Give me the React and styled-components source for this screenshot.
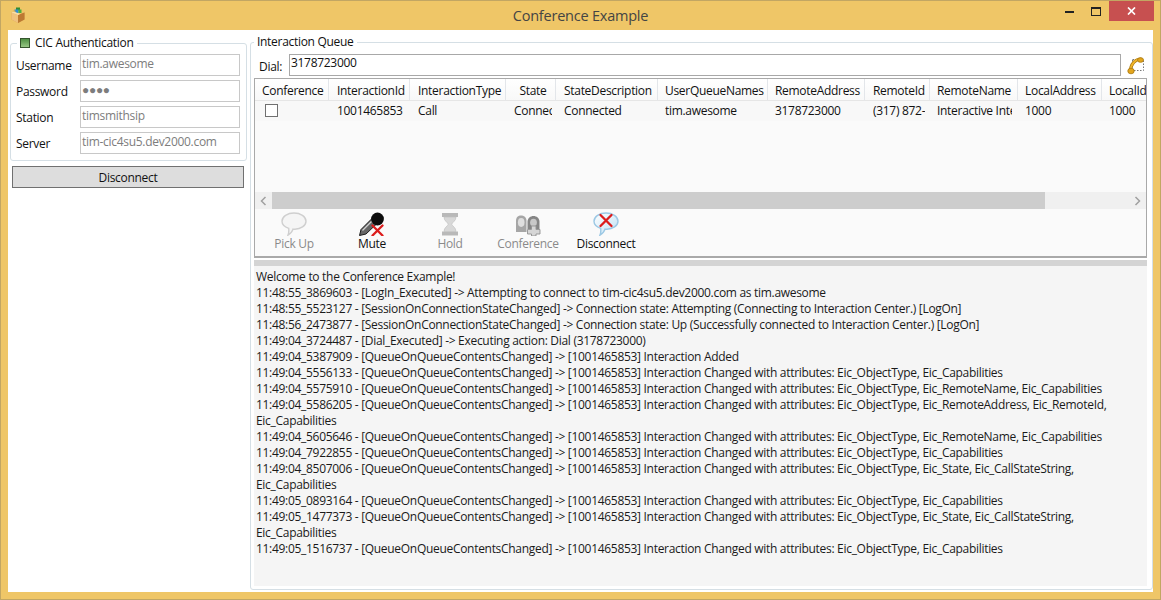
import React from "react";
import styled, { createGlobalStyle } from "styled-components";

const Global = createGlobalStyle`
  html, body { margin: 0; padding: 0; width: 1161px; height: 600px; overflow: hidden; }
  body { font-family: "Open Sans", "Noto Sans", sans-serif; font-size: 12px; letter-spacing: -0.3px; color: #111; }
  * { box-sizing: border-box; }
`;

const Frame = styled.div`
  width: 1161px; height: 600px; display: flex; flex-direction: column;
  background: #efc667; border: 1px solid #c2a663; padding: 0 7px 7px;
`;
const TitleBar = styled.header`
  height: 29px; flex: none; display: grid; grid-template-columns: 1fr auto 1fr; align-items: start;
`;
const AppIcon = styled.svg` width: 16px; height: 16px; margin: 6px 0 0 2px; `;
const Title = styled.h1`
  margin: 5px 0 0; font-size: 14.5px; font-weight: 400; line-height: 20px; color: #444; letter-spacing: -0.22px;
`;
const Controls = styled.div` display: flex; justify-content: flex-end; margin-right: -1px; `;
const Ctl = styled.div`
  width: ${p => p.$w}px; height: 20px; display: flex; align-items: center; justify-content: center;
  background: ${p => p.$bg || "transparent"};
`;
const Client = styled.main`
  flex: 1; min-height: 0; background: #fff; display: flex; padding: 5px 0 2px 2px; gap: 3px;
`;
const Left = styled.section` width: 237px; flex: none; display: flex; flex-direction: column; `;
const Group = styled.fieldset`
  margin: 0; min-width: 0; border: 1px solid #d5dfe5; border-radius: 3px;
`;
const AuthGroup = styled(Group)` padding: 3px 5px 6px 5px; height: 126px; `;
const Legend = styled.legend`
  padding: 0 4px 0 3px; margin-left: ${p => p.$ml}px; line-height: 16px; display: flex; align-items: center; gap: 5px;
`;
const Led = styled.span`
  width: 10px; height: 10px; background: linear-gradient(#4f9144, #97c785); border: 1px solid #35552e;
`;
const FormRow = styled.label`
  display: grid; grid-template-columns: 64px 160px; align-items: center; height: 22px; margin-bottom: 4px;
`;
const FieldLabel = styled.span``;
const TextBox = styled.div`
  height: 22px; border: 1px solid #c8c8c8; padding: 0 2px 2px 1px; line-height: 17px; color: ${p => p.$c || "#7d7d7d"};
  white-space: nowrap; overflow: hidden;
`;
const ConnectButton = styled.button`
  margin: 5px 3px 0 2px; height: 22px; background: #dddddd; border: 1px solid #707070; padding: 0;
  font: inherit; letter-spacing: inherit; color: #111;
`;
const QueueGroup = styled(Group)`
  flex: 1; min-width: 0; padding: 0 4px 3px 3px; display: flex; flex-direction: column; margin-top: -1px;
`;
const DialRow = styled.div` display: flex; align-items: center; height: 22px; margin-top: 4px; `;
const DialLabel = styled.span` width: 35px; padding: 3px 0 0 5px; `;
const DialInput = styled(TextBox)` flex: none; width: 832px; border-color: #a8a8a8; height: 22px; line-height: 16px; `;
const PhoneIcon = styled.svg` width: 18px; height: 19px; margin-left: 5px; `;
const Grid = styled.div`
  margin-top: 2px; width: 893px; height: 180px; flex: none; border: 1px solid #a9a9a9; border-bottom-width: 2px;
  background: #fafafa; display: flex; flex-direction: column; overflow: hidden;
`;
const TableArea = styled.div` height: 113px; flex: none; overflow: hidden; `;
const RowLine = styled.div`
  display: flex; width: 920px;
  height: ${p => p.$h}px; background: ${p => p.$head ? "linear-gradient(#ffffff, #f8f8f8)" : "#f8f8f8"};
`;
const HeadCell = styled.div`
  width: ${p => p.$w}px; flex: none; padding-left: ${p => p.$pl ?? 8}px; line-height: 23px; border-right: 1px solid #e3e6ea;
  border-bottom: 1px solid #e6e6e6; white-space: nowrap; overflow: hidden;
  text-align: ${p => p.$center ? "center" : "left"};
`;
const DataCell = styled.div`
  width: ${p => p.$w}px; flex: none; padding-left: ${p => p.$pl ?? 8}px; padding-right: ${p => p.$pr ?? 0}px; line-height: 19px;
  height: 20px; overflow: hidden; white-space: nowrap;
`;
const Clip = styled.div` overflow: hidden; `;
const Check = styled.span`
  display: block; width: 13px; height: 13px; border: 1px solid #707070; background: #fff; margin: 3px 0 0 10px;
`;
const HScroll = styled.div` height: 17px; flex: none; background: #f0f0f0; display: flex; align-items: center; `;
const Arrow = styled.div` width: 17px; height: 17px; display: flex; align-items: center; justify-content: center; flex: none; `;
const Thumb = styled.div` width: 773px; height: 17px; background: #cdcdcd; flex: none; `;
const Spacer = styled.div` flex: 1; `;
const Toolbar = styled.div` display: flex; flex: 1; `;
const ToolButton = styled.div`
  width: 78px; display: flex; flex-direction: column; align-items: center; padding-top: 3px;
  color: ${p => p.$off ? "#8a8a8a" : "#111"};
`;
const ToolIcon = styled.svg` width: 28px; height: 24px; flex: none; `;
const ToolLabel = styled.span` line-height: 16px; `;
const Splitter = styled.div` height: 6px; width: 893px; flex: none; background: #d4d4d4; margin-top: 2px; `;
const Log = styled.div` flex: 1; width: 893px; background: #f5f5f5; padding: 3px 2px 2px; `;
const LogLine = styled.div` line-height: 16px; white-space: nowrap; color: #1a1a1a; `;

const cols = [
  ["Conference", 74, false, 7], ["InteractionId", 81], ["InteractionType", 96], ["State", 50, true, 5],
  ["StateDescription", 102], ["UserQueueNames", 110, false, 7], ["RemoteAddress", 97, false, 7], ["RemoteId", 65],
  ["RemoteName", 88, false, 7], ["LocalAddress", 84, false, 7], ["LocalId", 60, false, 7],
];
const cells = [
  [null, 74, 0], ["1001465853", 81], ["Call", 96], ["Connected", 50, 8, 4], ["Connected", 102],
  ["tim.awesome", 110, 7], ["3178723000", 97, 7], ["(317) 872-1000", 65, 8, 5], ["Interactive Intelligence", 88, 7, 6],
  ["1000", 84, 7], ["1000", 60, 7],
];
const log = [
  "Welcome to the Conference Example!",
  "11:48:55_3869603 - [LogIn_Executed] -> Attempting to connect to tim-cic4su5.dev2000.com as tim.awesome",
  "11:48:55_5523127 - [SessionOnConnectionStateChanged] -> Connection state: Attempting (Connecting to Interaction Center.) [LogOn]",
  "11:48:56_2473877 - [SessionOnConnectionStateChanged] -> Connection state: Up (Successfully connected to Interaction Center.) [LogOn]",
  "11:49:04_3724487 - [Dial_Executed] -> Executing action: Dial (3178723000)",
  "11:49:04_5387909 - [QueueOnQueueContentsChanged] -> [1001465853] Interaction Added",
  "11:49:04_5556133 - [QueueOnQueueContentsChanged] -> [1001465853] Interaction Changed with attributes: Eic_ObjectType, Eic_Capabilities",
  "11:49:04_5575910 - [QueueOnQueueContentsChanged] -> [1001465853] Interaction Changed with attributes: Eic_ObjectType, Eic_RemoteName, Eic_Capabilities",
  "11:49:04_5586205 - [QueueOnQueueContentsChanged] -> [1001465853] Interaction Changed with attributes: Eic_ObjectType, Eic_RemoteAddress, Eic_RemoteId,",
  "Eic_Capabilities",
  "11:49:04_5605646 - [QueueOnQueueContentsChanged] -> [1001465853] Interaction Changed with attributes: Eic_ObjectType, Eic_RemoteName, Eic_Capabilities",
  "11:49:04_7922855 - [QueueOnQueueContentsChanged] -> [1001465853] Interaction Changed with attributes: Eic_ObjectType, Eic_Capabilities",
  "11:49:04_8507006 - [QueueOnQueueContentsChanged] -> [1001465853] Interaction Changed with attributes: Eic_ObjectType, Eic_State, Eic_CallStateString,",
  "Eic_Capabilities",
  "11:49:05_0893164 - [QueueOnQueueContentsChanged] -> [1001465853] Interaction Changed with attributes: Eic_ObjectType, Eic_Capabilities",
  "11:49:05_1477373 - [QueueOnQueueContentsChanged] -> [1001465853] Interaction Changed with attributes: Eic_ObjectType, Eic_State, Eic_CallStateString,",
  "Eic_Capabilities",
  "11:49:05_1516737 - [QueueOnQueueContentsChanged] -> [1001465853] Interaction Changed with attributes: Eic_ObjectType, Eic_Capabilities",
];

const bubblePath = "M14 1c6.500 0 12 3.500 12 8.200 0 4.600-5.500 8-11 8-.8 0-1.500 0-2-.1-.5 2-2.500 4.500-5 6 .8-2 1-4 .7-6.800C4.500 14.800 2 12.300 2 9.200 2 4.500 7.500 1 14 1z";
const Bubble = ({ fill, stroke }) => <path d={bubblePath} fill={fill} stroke={stroke} strokeWidth="1.400" />;
const RedX = ({ x, y, s }) => (
  <path d={`M${x - s} ${y - s}L${x + s} ${y + s}M${x + s} ${y - s}L${x - s} ${y + s}`} stroke="#dc1c1c" strokeWidth="2.300" strokeLinecap="round" />
);

const tools = [
  { label: "Pick Up", off: true, icon: <Bubble fill="#f5f5f5" stroke="#cfcfcf" /> },
  {
    label: "Mute",
    icon: (
      <>
        <path d="M1.500 23.500l1.500-6L14 6.500l5 5L8 22z" fill="#666" stroke="#1c1c1c" strokeWidth="1" />
        <path d="M4.500 18.500l9-9" stroke="#d0d0d0" strokeWidth="1.200" />
        <circle cx="19.500" cy="7" r="6.400" fill="#0c0c0c" />
        <RedX x={19.500} y={18.500} s={5} />
      </>
    ),
  },
  {
    label: "Hold",
    off: true,
    icon: (
      <>
        <rect x="6" y="1" width="16" height="4" fill="#b9b9b9" />
        <rect x="6" y="19.500" width="16" height="4" fill="#b9b9b9" />
        <path d="M8 5h12c0 4-3.500 5-4.300 7.200.8 2.200 4.300 3.300 4.300 7.300H8c0-4 3.500-5.100 4.300-7.300C11.500 10 8 9 8 5z" fill="#d8d8d8" stroke="#c2c2c2" strokeWidth=".7" />
      </>
    ),
  },
  {
    label: "Conference",
    off: true,
    icon: (
      <>
        <path d="M2 20V9c0-4 2.200-5.500 5-5.500S12.500 5 12.500 9v11z" fill="#a6a6a6" />
        <ellipse cx="7.200" cy="10.500" rx="3.300" ry="4.400" fill="#dedede" />
        <path d="M13.500 17v-7c0-4 3-6 6-6s6 2 6 6v7z" fill="#858585" />
        <ellipse cx="19.500" cy="10.500" rx="3.400" ry="3.800" fill="#c8c8c8" />
        <path d="M17.500 14h4.500v3.500h4v4.500h-4v2h-4.500v-2h-4v-4.500h4z" fill="#d6d6d6" stroke="#929292" strokeWidth=".9" />
      </>
    ),
  },
  {
    label: "Disconnect",
    icon: (
      <>
        <defs>
          <linearGradient id="discFill" x1="0" x2="1" y1="0" y2="1">
            <stop offset="0" stopColor="#ffffff" />
            <stop offset="1" stopColor="#bfe0f4" />
          </linearGradient>
        </defs>
        <Bubble fill="url(#discFill)" stroke="#9cc8e4" />
        <RedX x={14} y={8.500} s={5.500} />
      </>
    ),
  },
];

export default function App() {
  return (
    <>
      <Global />
      <Frame>
        <TitleBar>
          <AppIcon viewBox="0 0 16 16">
            <rect x="6" y="0.500" width="4" height="3" fill="#2f8a34" />
            <rect x="4.500" y="2.500" width="4" height="3.500" fill="#2f8fd6" />
            <rect x="8.500" y="2.500" width="3" height="3.500" fill="#4cae3d" />
            <rect x="3.500" y="3.500" width="2" height="2" fill="#c9a44a" />
            <path d="M1.500 5.500L8 8 14.500 5.500V12.500L8 16 1.500 12.500z" fill="#d8994e" />
            <path d="M1.500 5.500L8 8V16L1.500 12.500z" fill="#f0c27c" />
            <path d="M8 8l6.500-2.500V12.500L8 16z" fill="#bd7a32" />
            <path d="M1.500 5.500L4 4.500l6 2.500L8 8z" fill="#f7dca8" />
          </AppIcon>
          <Title>Conference Example</Title>
          <Controls>
            <Ctl $w={26}><svg width="9" height="3"><rect width="9" height="2" y="1" fill="#222" /></svg></Ctl>
            <Ctl $w={27}><svg width="10" height="9"><rect x=".5" y=".5" width="9" height="8" fill="none" stroke="#222" /><rect width="10" height="2" fill="#222" /></svg></Ctl>
            <Ctl $w={45} $bg="#c75050"><svg width="9" height="8"><path d="M1 .5L8 7.500M8 .5L1 7.500" stroke="#fff" strokeWidth="1.700" /></svg></Ctl>
          </Controls>
        </TitleBar>
        <Client>
          <Left>
            <AuthGroup>
              <Legend $ml={1}><Led />CIC Authentication</Legend>
              <FormRow><FieldLabel>Username</FieldLabel><TextBox>tim.awesome</TextBox></FormRow>
              <FormRow><FieldLabel>Password</FieldLabel><TextBox>●●●●</TextBox></FormRow>
              <FormRow><FieldLabel>Station</FieldLabel><TextBox>timsmithsip</TextBox></FormRow>
              <FormRow><FieldLabel>Server</FieldLabel><TextBox>tim-cic4su5.dev2000.com</TextBox></FormRow>
            </AuthGroup>
            <ConnectButton>Disconnect</ConnectButton>
          </Left>
          <QueueGroup>
            <Legend $ml={0}>Interaction Queue</Legend>
            <DialRow>
              <DialLabel>Dial:</DialLabel>
              <DialInput $c="#111">3178723000</DialInput>
              <PhoneIcon viewBox="0 0 18 19">
                <rect x="6.500" y="3.500" width="11" height="11" fill="none" stroke="#777" strokeDasharray="1.500 1.500" />
                <path d="M15.500 3C9 3 4.500 8.500 4.500 15" fill="none" stroke="#a9770d" strokeWidth="3.200" />
                <path d="M15.500 3C9 3 4.500 8.500 4.500 15" fill="none" stroke="#f0b429" strokeWidth="1.800" />
                <ellipse cx="14.500" cy="4" rx="3" ry="2.300" fill="#e3a51d" stroke="#a9770d" strokeWidth=".8" />
                <ellipse cx="5" cy="15" rx="3.200" ry="2.800" fill="#e3a51d" stroke="#a9770d" strokeWidth=".8" />
              </PhoneIcon>
            </DialRow>
            <Grid>
              <TableArea>
                <RowLine $h={22} $head>
                  {cols.map(([t, w, c, pl]) => <HeadCell key={t} $w={w} $center={c} $pl={pl}>{t}</HeadCell>)}
                </RowLine>
                <RowLine $h={20}>
                  {cells.map(([t, w, pl, pr], i) => (
                    <DataCell key={i} $w={w} $pl={pl} $pr={pr}>
                      {t ? <Clip>{t}</Clip> : <Check />}
                    </DataCell>
                  ))}
                </RowLine>
              </TableArea>
              <HScroll>
                <Arrow><svg width="7" height="10"><path d="M5.500 1L1.500 5l4 4" fill="none" stroke="#a0a0a0" strokeWidth="1.500" /></svg></Arrow>
                <Thumb />
                <Spacer />
                <Arrow><svg width="7" height="10"><path d="M1.500 1l4 4-4 4" fill="none" stroke="#a0a0a0" strokeWidth="1.500" /></svg></Arrow>
              </HScroll>
              <Toolbar>
                {tools.map(t => (
                  <ToolButton key={t.label} $off={t.off}>
                    <ToolIcon viewBox="0 0 28 24">{t.icon}</ToolIcon>
                    <ToolLabel>{t.label}</ToolLabel>
                  </ToolButton>
                ))}
              </Toolbar>
            </Grid>
            <Splitter />
            <Log>
              {log.map((l, i) => <LogLine key={i}>{l}</LogLine>)}
            </Log>
          </QueueGroup>
        </Client>
      </Frame>
    </>
  );
}
